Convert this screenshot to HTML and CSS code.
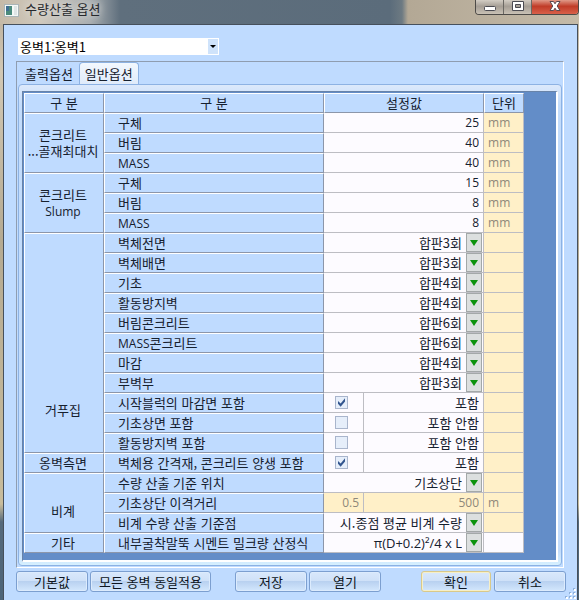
FILE: index.html
```html
<!DOCTYPE html>
<html lang="ko">
<head>
<meta charset="utf-8">
<title>수량산출 옵션</title>
<link rel="stylesheet" href="styles.css">
</head>
<body>
<div class="window">
  <header class="titlebar">
    <svg class="app-icon" width="15" height="13" viewBox="0 0 15 13" aria-hidden="true">
      <rect x="0.5" y="0.5" width="14" height="12" fill="#f4f8f6" stroke="#aab5b8"/>
      <rect x="2" y="2" width="6" height="9" fill="#4a8a7c"/>
      <rect x="2" y="2" width="3" height="5" fill="#3f6f92"/>
      <rect x="10" y="2" width="3" height="9" fill="#dfe5e6"/>
    </svg>
    <h1>수량산출 옵션</h1>
    <div class="window-buttons">
      <button type="button" aria-label="최소화"><svg width="14" height="12" viewBox="0 0 14 12"><rect x="1.5" y="5.500" width="11" height="4" rx="1" fill="#fff" stroke="#4b4b52"/></svg></button>
      <button type="button" aria-label="최대화"><svg width="14" height="12" viewBox="0 0 14 12"><path d="M1.500 .5h11v9h-11zM4.500 3.500h5v3h-5z" fill="#fff" fill-rule="evenodd" stroke="#4b4b52"/></svg></button>
      <button type="button" class="close" aria-label="닫기"><svg width="14" height="12" viewBox="0 0 14 12"><path d="M2 .5h3.500L7 2.800 8.500.5H12L9.200 5 12 9.500H8.500L7 7.200 5.500 9.500H2L4.800 5z" fill="#fff" stroke="#5a4a50"/></svg></button>
    </div>
  </header>
  <main class="client">
    <div class="combo">
      <select aria-label="옹벽"><option>옹벽1:옹벽1</option></select>
      <span class="combo-arrow"></span>
    </div>
    <section class="tabs">
      <div class="tab-list" role="tablist">
        <button type="button" role="tab" class="tab">출력옵션</button>
        <button type="button" role="tab" class="tab active" aria-selected="true">일반옵션</button>
      </div>
      <div class="tab-page">
        <div class="grid-frame">
          <table>
            <colgroup><col class="c-group"><col class="c-item"><col class="c-small"><col class="c-value"><col class="c-small"></colgroup>
            <thead>
              <tr><th>구 분</th><th>구 분</th><th colspan="2">설정값</th><th>단위</th></tr>
            </thead>
            <tbody>
              <tr><th rowspan="3" class="group">콘크리트<br>...골재최대치</th><th class="item" id="r1">구체</th><td colspan="2"><input class="num" aria-labelledby="r1" value="25"></td><td class="unit">mm</td></tr>
              <tr><th class="item" id="r2">버림</th><td colspan="2"><input class="num" aria-labelledby="r2" value="40"></td><td class="unit">mm</td></tr>
              <tr><th class="item" id="r3"><span class="latin">MASS</span></th><td colspan="2"><input class="num" aria-labelledby="r3" value="40"></td><td class="unit">mm</td></tr>
              <tr><th rowspan="3" class="group">콘크리트<br><span class="latin">Slump</span></th><th class="item" id="r4">구체</th><td colspan="2"><input class="num" aria-labelledby="r4" value="15"></td><td class="unit">mm</td></tr>
              <tr><th class="item" id="r5">버림</th><td colspan="2"><input class="num" aria-labelledby="r5" value="8"></td><td class="unit">mm</td></tr>
              <tr><th class="item" id="r6"><span class="latin">MASS</span></th><td colspan="2"><input class="num" aria-labelledby="r6" value="8"></td><td class="unit">mm</td></tr>
              <tr><th rowspan="11" class="group form">거푸집</th><th class="item" id="r7">벽체전면</th><td colspan="2"><div class="pick"><select aria-labelledby="r7"><option>합판3회</option></select><span class="arrow"></span></div></td><td class="unit"></td></tr>
              <tr><th class="item" id="r8">벽체배면</th><td colspan="2"><div class="pick"><select aria-labelledby="r8"><option>합판3회</option></select><span class="arrow"></span></div></td><td class="unit"></td></tr>
              <tr><th class="item" id="r9">기초</th><td colspan="2"><div class="pick"><select aria-labelledby="r9"><option>합판4회</option></select><span class="arrow"></span></div></td><td class="unit"></td></tr>
              <tr><th class="item" id="r10">활동방지벽</th><td colspan="2"><div class="pick"><select aria-labelledby="r10"><option>합판4회</option></select><span class="arrow"></span></div></td><td class="unit"></td></tr>
              <tr><th class="item" id="r11">버림콘크리트</th><td colspan="2"><div class="pick"><select aria-labelledby="r11"><option>합판6회</option></select><span class="arrow"></span></div></td><td class="unit"></td></tr>
              <tr><th class="item" id="r12"><span class="latin">MASS</span>콘크리트</th><td colspan="2"><div class="pick"><select aria-labelledby="r12"><option>합판6회</option></select><span class="arrow"></span></div></td><td class="unit"></td></tr>
              <tr><th class="item" id="r13">마감</th><td colspan="2"><div class="pick"><select aria-labelledby="r13"><option>합판4회</option></select><span class="arrow"></span></div></td><td class="unit"></td></tr>
              <tr><th class="item" id="r14">부벽부</th><td colspan="2"><div class="pick"><select aria-labelledby="r14"><option>합판3회</option></select><span class="arrow"></span></div></td><td class="unit"></td></tr>
              <tr><th class="item" id="r15">시작블럭의 마감면 포함</th><td class="check"><input type="checkbox" aria-labelledby="r15" checked></td><td class="state">포함</td><td class="unit"></td></tr>
              <tr><th class="item" id="r16">기초상면 포함</th><td class="check"><input type="checkbox" aria-labelledby="r16"></td><td class="state">포함 안함</td><td class="unit"></td></tr>
              <tr><th class="item" id="r17">활동방지벽 포함</th><td class="check"><input type="checkbox" aria-labelledby="r17"></td><td class="state">포함 안함</td><td class="unit"></td></tr>
              <tr><th class="group">옹벽측면</th><th class="item" id="r18">벽체용 간격재, 콘크리트 양생 포함</th><td class="check"><input type="checkbox" aria-labelledby="r18" checked></td><td class="state">포함</td><td class="unit"></td></tr>
              <tr><th rowspan="3" class="group scaffold">비계</th><th class="item" id="r19">수량 산출 기준 위치</th><td colspan="2"><div class="pick"><select aria-labelledby="r19"><option>기초상단</option></select><span class="arrow"></span></div></td><td class="unit"></td></tr>
              <tr><th class="item" id="r20">기초상단 이격거리</th><td class="off"><input class="num" aria-labelledby="r20" value="0.5" disabled></td><td class="off"><input class="num" aria-labelledby="r20" value="500" disabled></td><td class="unit">m</td></tr>
              <tr><th class="item" id="r21">비계 수량 산출 기준점</th><td colspan="2"><div class="pick"><select aria-labelledby="r21"><option>시.종점 평균 비계 수량</option></select><span class="arrow"></span></div></td><td class="unit"></td></tr>
              <tr><th class="group">기타</th><th class="item" id="r22">내부굴착말뚝 시멘트 밀크량 산정식</th><td colspan="2"><div class="pick"><select class="formula" aria-labelledby="r22"><option>π(D+0.2)²/4 x L</option></select><span class="arrow"></span></div></td><td></td></tr>
            </tbody>
          </table>
        </div>
      </div>
    </section>
    <footer class="actions">
      <button type="button" class="w-m">기본값</button>
      <button type="button" class="w-l">모든 옹벽 동일적용</button>
      <span class="gap"></span>
      <button type="button" class="w-m">저장</button>
      <button type="button" class="w-m">열기</button>
      <span class="gap wide"></span>
      <button type="button" class="w-m default">확인</button>
      <button type="button" class="w-m">취소</button>
    </footer>
    <svg class="grip" width="12" height="12" viewBox="0 0 12 12" aria-hidden="true">
      <path d="M8 0h2v2H8zM4 4h2v2H4zM8 4h2v2H8zM0 8h2v2H0zM4 8h2v2H4zM8 8h2v2H8z" fill="#8fb0da"/>
      <path d="M9 1h2v2H9zM5 5h2v2H5zM9 5h2v2H9zM1 9h2v2H1zM5 9h2v2H5zM9 9h2v2H9z" fill="#fff"/>
    </svg>
  </main>
</div>
</body>
</html>
```
FILE: styles.css
```css
* { box-sizing: border-box; }

body {
  margin: 0;
  font: 13px/16px "Noto Sans CJK KR", sans-serif;
  color: #16202e;
}

button, select, input { font: inherit; color: inherit; margin: 0; }

.latin, .num, .unit {
  font-family: "Open Sans", "Noto Sans CJK KR", sans-serif;
  font-size: 12px;
}

.window {
  min-height: 100vh;
  display: flex;
  flex-direction: column;
  padding: 0 1px 0 3px;
  background: linear-gradient(#b9ad9a, #d2c8b4 12%, #b5aa92 40%, #c8bc9c 84%, #55697b 87%, #4c6478);
}

.titlebar {
  display: flex;
  align-items: flex-start;
  height: 24px;
  margin: 0 -1px 0 -3px;
  padding-left: 4px;
  background: linear-gradient(90deg, #c5baa8 0, #cfc8bc 40px, #a9aeb1 90px, #5f6f7d 120px, #5b6c7b 390px, #6d7a82 402px, #b3a895 408px, #c4baa8);
}

.app-icon { margin-top: 4px; }

h1 {
  flex: 1;
  margin: 1px 0 0 6px;
  font-size: 13px;
  line-height: 16px;
  font-weight: 400;
  color: #26282c;
  text-shadow: 0 0 6px #dcdcda, 0 0 8px #dcdcda;
}

.window-buttons {
  display: flex;
  height: 15px;
  border: 1px solid #4d4b48;
  border-top: 0;
  border-radius: 0 0 4px 4px;
  overflow: hidden;
}

.window-buttons button {
  width: 28px;
  padding: 0;
  border: 0;
  border-right: 1px solid #6b6863;
  background: linear-gradient(#d3cdc4, #a59e95 45%, #c9c1b5);
}

.window-buttons svg { display: block; margin: 0 auto; }

.window-buttons .close {
  width: 46px;
  border-right: 0;
  background: linear-gradient(#e09a88, #c03c28 45%, #d8604a);
}

.client {
  position: relative;
  flex: 1;
  padding: 13px 11px 8px 12px;
  border: 1px solid #46505c;
  border-bottom: 0;
  background: #bfdbff;
}

.combo {
  position: relative;
  width: 201px;
  height: 17px;
  margin-left: 2px;
  background: #fff;
}

.combo select {
  appearance: none;
  display: block;
  width: 100%;
  height: 17px;
  padding: 0 18px 0 1px;
  border: 1px solid #fff;
  background: none;
  color: #000;
  line-height: 14px;
}

.combo-arrow {
  position: absolute;
  top: 1px;
  right: 1px;
  width: 10px;
  height: 15px;
  background: #cfe3fb;
  pointer-events: none;
}

.combo-arrow::before {
  content: "";
  position: absolute;
  top: 6px;
  left: 2px;
  border: 3px solid transparent;
  border-top-color: #000;
  border-bottom: 0;
}

.tabs {
  margin: 6px 2px 0 0;
  padding: 0 1px 1px;
  border: 1px solid #8f9db0;
  border-right-color: #fff;
  border-bottom-color: #fff;
}

.tab-list { display: flex; height: 22px; padding-left: 1px; }

.tab {
  height: 22px;
  padding: 0 5px;
  border: 1px solid transparent;
  border-bottom: 0;
  background: none;
}

.tab.active {
  border-color: #8db2e3;
  border-radius: 4px 4px 0 0;
  background: linear-gradient(#f3f8fe, #dfebfa);
}

.tab-page {
  padding: 6px 3px 3px;
  border: 1px solid #8db2e3;
  border-radius: 4px;
  background: linear-gradient(#dce9fb, #c3dcfb 20px, #c3dcfb 97%, #d6f0ff);
}

.grid-frame {
  padding: 1px 1px 7px;
  border: 1px solid #6883a8;
  border-right: 2px solid #fff;
  border-bottom: 2px solid #fff;
  background: #638dc8;
}

table {
  width: 500px;
  table-layout: fixed;
  border-collapse: separate;
  border-spacing: 0;
}

.c-group { width: 80px; }
.c-item { width: 220px; }
.c-small { width: 40px; }
.c-value { width: 120px; }

th, td {
  height: 20px;
  padding: 0;
  line-height: 16px;
  font-weight: 400;
  white-space: nowrap;
}

th {
  border: 1px solid #fff;
  border-right-color: #8c96aa;
  border-bottom-color: #8c96aa;
  background: #bfdbff;
}

td {
  border-right: 1px solid #bdbdc3;
  border-bottom: 1px solid #bdbdc3;
  background: #fdfbff;
}

.item { padding-left: 13px; text-align: left; }
.group { padding-right: 2px; }
.form { padding-top: 134px; }
.scaffold { padding-top: 16px; }

td.unit { padding-left: 4px; color: #8f887a; }
.unit, .off { background: #fff0c8; }

.num {
  display: block;
  width: 100%;
  height: 19px;
  padding: 0 4px;
  border: 0;
  background: none;
  text-align: right;
}

.num:disabled { color: #8f887a; }

.pick { position: relative; }

.pick select {
  appearance: none;
  display: block;
  width: 100%;
  height: 19px;
  padding: 0 21px 0 0;
  border: 0;
  background: none;
  text-align-last: right;
}

.pick .formula { font-family: "Open Sans", sans-serif; }

.arrow {
  position: absolute;
  top: 0;
  right: 1px;
  width: 16px;
  height: 19px;
  border: 1px solid #a3a8a8;
  background: #dcdfdf;
  pointer-events: none;
}

.arrow::before {
  content: "";
  position: absolute;
  top: 6px;
  left: 3px;
  border: 4px solid transparent;
  border-top: 6px solid #0d930d;
  border-bottom: 0;
}

.check input {
  appearance: none;
  display: block;
  width: 13px;
  height: 13px;
  margin-left: 11px;
  border: 1px solid #a9b5cc;
  background: #e6eefa;
}

.check input:checked::before {
  content: "";
  display: block;
  height: 11px;
  background: #33568f;
  clip-path: polygon(18% 36%, 42% 58%, 82% 12%, 82% 40%, 42% 88%, 18% 62%);
}

.state { padding-right: 4px; text-align: right; }

.actions { display: flex; gap: 2px; margin-top: 3px; }

.actions button {
  height: 21px;
  padding: 0;
  border: 1px solid #7c9fd0;
  border-radius: 3px;
  background: linear-gradient(#d9e8fb, #cfe1f8 45%, #b9d1f0 50%, #d3e7fd);
  box-shadow: inset 0 0 0 1px #dcebfd;
  color: #0c1420;
  line-height: 16px;
}

.w-m { flex: 0 1 72px; }
.w-l { flex: 0 1 121px; }
.gap { flex: 0 1 20px; }
.gap.wide { flex: 1; }

.actions .default { flex-basis: 70px; margin-right: 1px; border-color: #d9c98a; box-shadow: inset 0 0 0 1px #f6efc8; }

.grip { position: absolute; right: 0; bottom: 0; }
```
